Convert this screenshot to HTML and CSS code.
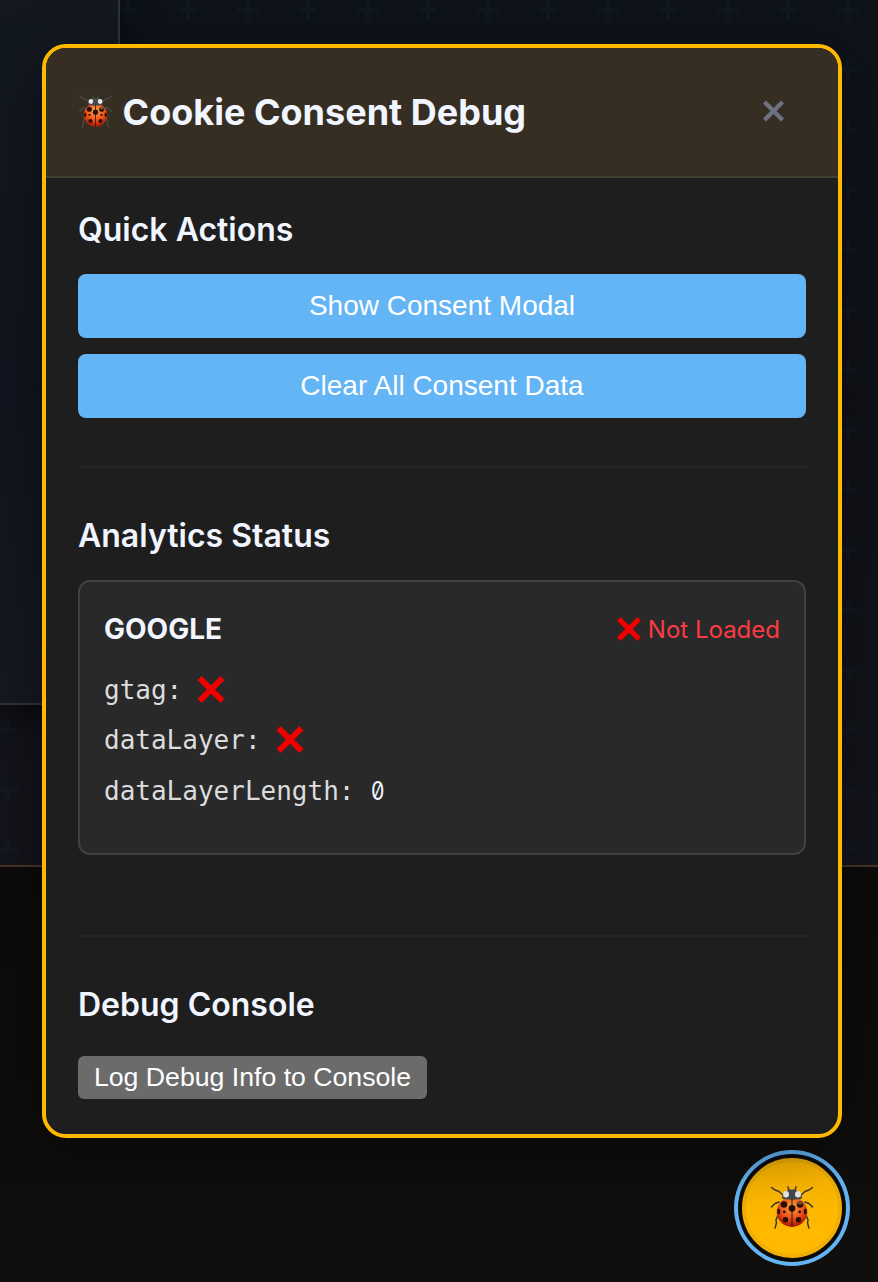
FILE: index.html
```html
<!DOCTYPE html>
<html lang="en">
<head>
<meta charset="utf-8">
<title>Cookie Consent Debug</title>
<link rel="stylesheet" href="styles.css">
</head>
<body>
<svg width="0" height="0" class="defs" aria-hidden="true">
  <defs>
    <radialGradient id="shell" cx="50%" cy="32%" r="68%">
      <stop offset="0" stop-color="#ffa544"/><stop offset=".55" stop-color="#f0561b"/><stop offset="1" stop-color="#a81505"/>
    </radialGradient>
    <symbol id="bug" viewBox="0 0 44 44">
      <g fill="none" stroke="currentColor" stroke-width="1.500" stroke-linecap="round" stroke-linejoin="round">
        <path d="M13 9 9 5.500 5 4 1.500 1.500M31 9l4-3.500 4-1.500 3.500-2.500M19 4l-1-3M25 4l1-3M9 16l-4 1.500-3.500 3.500M35 16l4 1.500 3.500 3.500M8 29l-2 5 .5 3L5 42M36 29l2 5-.5 3 1.500 5"/>
      </g>
      <ellipse cx="22" cy="26" rx="15.300" ry="15" fill="url(#shell)"/>
      <path fill="#45484c" d="M12 12.500C12 6 17 3.500 22 3.500S32 6 32 12.500C26 14 18 14 12 12.500z"/>
      <ellipse cx="16" cy="8.300" rx="3" ry="3.200" fill="#e9e9e8"/><ellipse cx="28" cy="8.300" rx="3" ry="3.200" fill="#e9e9e8"/>
      <g fill="#2a1006">
        <circle cx="22" cy="22.300" r="3.400"/><circle cx="14" cy="18.500" r="3.300"/><circle cx="30" cy="18.500" r="3.300"/>
        <circle cx="14.300" cy="25.800" r="1.400"/><circle cx="29.700" cy="25.800" r="1.400"/>
        <ellipse cx="8.700" cy="25.500" rx="1.500" ry="3"/><ellipse cx="35.300" cy="25.500" rx="1.500" ry="3"/>
        <circle cx="15.500" cy="33.800" r="2.700"/><circle cx="28.500" cy="33.800" r="2.700"/>
        <path d="M21.500 13h1v28h-1z"/>
      </g>
      <ellipse cx="30" cy="17" rx="3" ry="1.600" fill="#ffd08a" opacity=".35"/>
    </symbol>
    <symbol id="cross" viewBox="0 0 26 26">
      <path d="M2 2 24 24M24 2 2 24" stroke="#f10000" stroke-width="5.600" fill="none"/>
    </symbol>
  </defs>
</svg>
<div class="page">
  <main class="hero">
    <svg class="pattern" width="878" height="865">
      <defs>
        <pattern id="plus" width="60" height="60" patternUnits="userSpaceOnUse"><path d="M6 0h4v8h8v4h-8v8H6v-8H0V8h6zM58 8h2v4h-2z" fill="#12282c" fill-opacity=".28"/></pattern>
      </defs>
      <rect width="878" height="865" fill="url(#plus)"/>
    </svg>
    <aside class="panel"></aside>
  </main>
  <footer class="footer"></footer>
</div>
<button class="fab" aria-label="Debug"><svg class="fab-icon"><use href="#bug"/></svg></button>
<section class="modal">
  <header class="modal-head">
    <h1 class="title"><svg class="title-icon"><use href="#bug"/></svg><span class="title-text">Cookie Consent Debug</span></h1>
    <svg class="close" viewBox="0 0 22 22"><path d="M2 2 20 20M20 2 2 20" stroke="#6b7280" stroke-width="4.400"/></svg>
  </header>
  <div class="content">
    <div class="group actions">
      <h2 class="heading">Quick Actions</h2>
      <button class="action">Show Consent Modal</button>
      <button class="action">Clear All Consent Data</button>
    </div>
    <div class="group status">
      <h2 class="heading">Analytics Status</h2>
      <div class="card">
        <div class="card-head"><h3 class="provider">GOOGLE</h3><span class="state"><svg class="state-x"><use href="#cross"/></svg><span>Not Loaded</span></span></div>
        <div class="row"><span>gtag:</span><svg class="row-x"><use href="#cross"/></svg></div>
        <div class="row"><span>dataLayer:</span><svg class="row-x"><use href="#cross"/></svg></div>
        <div class="row last"><span>dataLayerLength:</span><span class="value">0</span></div>
      </div>
    </div>
    <div class="group console">
      <h2 class="heading">Debug Console</h2>
      <button class="log">Log Debug Info to Console</button>
    </div>
  </div>
</section>
</body>
</html>
```
FILE: styles.css
```css
* { box-sizing: border-box; }
html, body { margin: 0; height: 1282px; overflow: hidden; }
body { position: relative; background: #11100d; font-family: Inter, sans-serif; color: #f1f5ff; }
.defs { position: absolute; }
h1, h2, h3 { margin: 0; }
button { border: 0; padding: 0; font-family: "Liberation Sans", sans-serif; color: #fff; }
svg { display: block; flex: none; }
.page { display: flex; flex-direction: column; height: 1282px; }
.hero { position: relative; height: 865px; background: linear-gradient(#0e131a, #111219 50%, #14141c); }
.pattern { position: absolute; inset: 0; }
.panel { position: relative; width: 120px; height: 705px; background: linear-gradient(#13191f, #11151f 55%, #171920); border-right: 2px solid #30333a; border-bottom: 2px solid #30333a; box-shadow: 0 8px 32px rgba(0,0,0,.6); }
.footer { flex: 1; border-top: 2px solid #4a3427; background: linear-gradient(#0c0b09, #100f0d); }
.fab { position: absolute; left: 742px; top: 1158px; width: 100px; height: 100px; border-radius: 50%; background: #ffb900; border: 4px solid #f1af05; box-shadow: 0 0 0 4px #0c0c0b, 0 0 0 8px #64b5f6; display: flex; align-items: center; justify-content: center; color: #3a3836; }
.fab-icon { width: 44px; height: 44px; }
.modal { position: absolute; left: 42px; top: 44px; width: 800px; height: 1094px; border: 4px solid #ffb900; border-radius: 24px; background: #1e1e1e; box-shadow: 0 16px 64px rgba(0,0,0,.4); }
.modal-head { display: flex; justify-content: space-between; align-items: center; height: 130px; padding: 0 53px 2px 32px; background: #362e22; border-bottom: 2px solid #454034; border-radius: 20px 20px 0 0; }
.title { display: flex; align-items: center; gap: 9.500px; font-size: 36px; line-height: 44px; font-weight: 700; padding-top: 1px; }
.title-icon { width: 35px; height: 34px; color: #4d4b47; }
.close { width: 23px; height: 22px; }
.content { padding: 0 32px; }
.group { padding-top: 32px; }
.actions { height: 290px; border-bottom: 2px solid #25262b; }
.status { height: 469px; border-bottom: 2px solid #262628; padding-top: 48px; }
.console { padding-top: 48px; }
.heading { font-size: 32px; line-height: 40px; font-weight: 600; margin-bottom: 24px; }
.console .heading { margin-bottom: 31px; }
.action { display: flex; align-items: center; justify-content: center; width: 728px; height: 64px; border-radius: 8px; background: #64b5f6; font-size: 28px; margin-bottom: 16px; }
.card { height: 275px; padding: 24px; border: 2px solid #404040; border-radius: 12px; background: #292929; }
.card-head { display: flex; justify-content: space-between; align-items: center; height: 46px; margin-bottom: 12px; }
.provider { font-size: 28px; font-weight: 700; }
.state { display: flex; align-items: center; gap: 7px; font-size: 24px; color: #fb3b44; }
.state-x { width: 24px; height: 24px; }
.row { display: flex; align-items: center; gap: 15px; height: 50px; font-family: "DejaVu Sans Mono", monospace; font-size: 26px; line-height: 32px; color: #dcdcde; }
.row.last { height: 52px; gap: 17px; }
.row span { padding-top: 2px; }
.row-x { width: 28px; height: 27px; }
.value { color: #f1f5ff; font-family: Inter, sans-serif; font-feature-settings: "zero"; transform: scaleX(.82); transform-origin: left; }
.log { display: flex; align-items: center; justify-content: center; width: 349px; height: 43px; border-radius: 6px; background: #6b6b6b; font-size: 26.670px; }
```
